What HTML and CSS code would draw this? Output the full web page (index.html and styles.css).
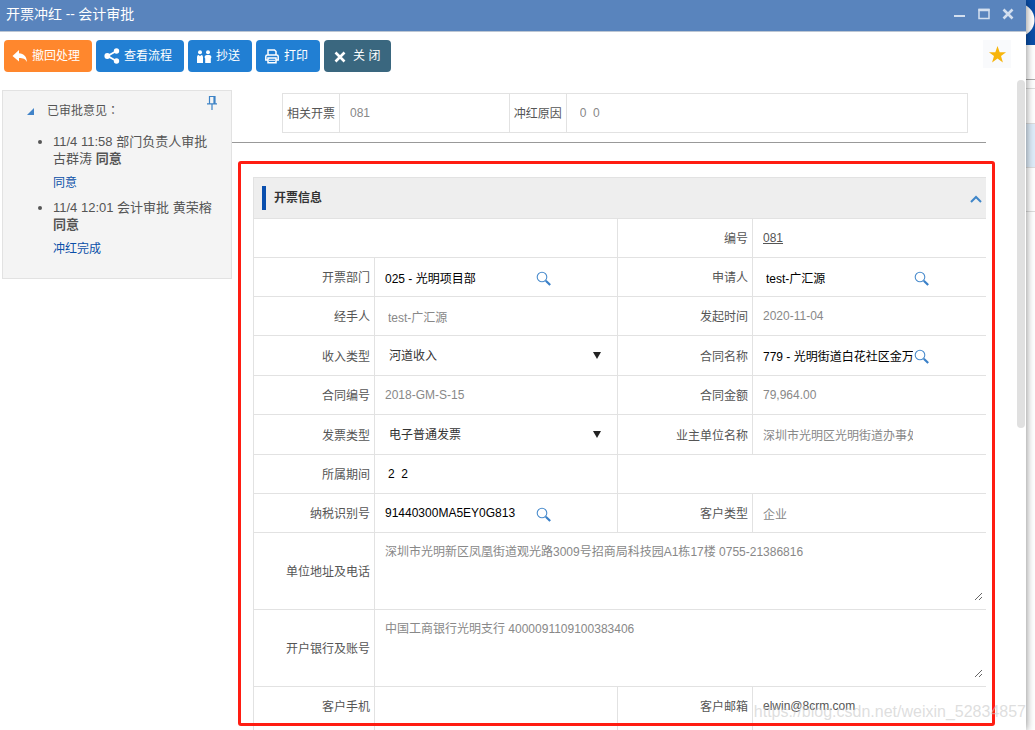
FILE: index.html
```html
<!DOCTYPE html>
<html lang="zh-CN">
<head>
<meta charset="utf-8">
<title>开票冲红 -- 会计审批</title>
<link rel="stylesheet" href="styles.css">
</head>
<body>
<svg class="defs" aria-hidden="true">
  <symbol id="search" viewBox="0 0 16 16">
    <circle cx="6" cy="6" r="4.8" fill="none" stroke="#4a8ccd" stroke-width="1.1"/>
    <path d="M9.8 9.8l4.4 4.2" stroke="#3a80c8" stroke-width="2.2"/>
  </symbol>
</svg>
<main class="window">
  <header class="titlebar">
    <h1>开票冲红 -- 会计审批</h1>
    <div class="window-controls">
      <button type="button" aria-label="最小化"><svg viewBox="0 0 12 12"><path d="M0 8h11" stroke="currentColor" stroke-width="2"/></svg></button>
      <button type="button" aria-label="最大化"><svg viewBox="0 0 12 12"><path d="M1 1.500h10v9H1z" fill="none" stroke="currentColor" stroke-width="1.500"/><path d="M.5 2h11" stroke="currentColor" stroke-width="2.500"/></svg></button>
      <button type="button" aria-label="关闭"><svg viewBox="0 0 12 12"><path d="M1.500 1.500l9 9M10.500 1.500l-9 9" stroke="currentColor" stroke-width="2.600"/></svg></button>
    </div>
  </header>

  <div class="toolbar">
    <button type="button" class="btn btn-orange"><svg viewBox="0 0 16 16"><path d="M7 2v3.300c5 .3 7.500 3.200 8 8.700-1.800-3.200-4-4-8-4V13.500L.5 8z" fill="currentColor"/></svg>撤回处理</button>
    <button type="button" class="btn"><svg viewBox="0 0 16 16"><path d="M12.500 3L3.500 8l9 5" fill="none" stroke="currentColor" stroke-width="1.800"/><g fill="currentColor"><circle cx="12.500" cy="3" r="2.700"/><circle cx="3.300" cy="8" r="2.900"/><circle cx="12.500" cy="13" r="2.700"/></g></svg>查看流程</button>
    <button type="button" class="btn"><svg viewBox="0 0 16 16"><g fill="currentColor"><circle cx="4" cy="4.200" r="2"/><circle cx="12" cy="4.200" r="2"/><path d="M1 15V9Q1 7 2.700 7L4 8.300 5.300 7Q7 7 7 9v6zM9.200 15v-4.500L8.500 9Q9 7 10.700 7h2.600q1.700 0 2.200 2l-.7 1.500V15z"/></g></svg>抄送</button>
    <button type="button" class="btn"><svg viewBox="0 0 16 16"><path d="M4 7V2h6.500L12 3.500V7M4 12H1.800V8.500Q1.800 7 3.300 7h9.400q1.500 0 1.500 1.500V12H12M4 10h8v4.700H4z" fill="none" stroke="currentColor" stroke-width="1.500"/><path d="M5 12.300h6" stroke="currentColor"/></svg>打印</button>
    <button type="button" class="btn btn-close"><svg viewBox="0 0 16 16"><path d="M3.500 4.500l9 9M12.500 4.500l-9 9" stroke="currentColor" stroke-width="2.600"/></svg>关&nbsp;闭</button>
    <button type="button" class="favorite" aria-label="收藏"><svg viewBox="0 0 20 20"><path d="M10 1l2.300 6.500H19l-5.300 4.100 2 6.900L10 14.300l-5.700 4.200 2-6.900L1 7.500h6.700z" fill="#f7b50c"/></svg></button>
  </div>

  <div class="workspace">
    <aside class="opinions">
      <div class="opinions-head">
        <svg class="caret" viewBox="0 0 8 8"><path d="M7 0v7H0z" fill="#4183c8"/></svg>
        <span>已审批意见<span class="colon" lang="zh-TW">：</span></span>
        <button type="button" class="pin" aria-label="固定"><svg viewBox="0 0 12 14"><path d="M3 .5h6M3.500 0v7.500M8 0v7.500M9 0v7.500M1 7.800h10M6 8v6" fill="none" stroke="#3d83c6" stroke-width="1.200"/></svg></button>
      </div>
      <ul>
        <li>11/4 11:58 部门负责人审批 古群涛 <b>同意</b><p>同意</p></li>
        <li>11/4 12:01 会计审批 黄荣榕 <b>同意</b><p>冲红完成</p></li>
      </ul>
    </aside>

    <div class="content">
      <div class="summary">
        <label for="related">相关开票</label>
        <div class="field"><input id="related" value="081" readonly></div>
        <label for="reason">冲红原因</label>
        <div class="field"><input id="reason" class="inset" value="0&nbsp;&nbsp;0" readonly></div>
      </div>

      <section class="panel">
        <header class="panel-head">
          <h2>开票信息</h2>
          <button type="button" aria-label="收起"><svg viewBox="0 0 12 8"><path d="M1 7l5-5 5 5" fill="none" stroke="#3f86c9" stroke-width="2"/></svg></button>
        </header>
        <div class="row">
          <div class="field blank-left"></div>
          <span class="name">编号</span>
          <div class="field"><a href="#">081</a></div>
        </div>
        <div class="row">
          <label for="dept">开票部门</label>
          <div class="field"><input id="dept" class="active" value="025 - 光明项目部"><button type="button" class="lookup" aria-label="查找部门"><svg><use href="#search"/></svg></button></div>
          <label for="applicant">申请人</label>
          <div class="field"><input id="applicant" class="active inset" value="test-广汇源"><button type="button" class="lookup" aria-label="查找申请人"><svg><use href="#search"/></svg></button></div>
        </div>
        <div class="row">
          <label for="handler">经手人</label>
          <div class="field"><input id="handler" class="inset" value="test-广汇源" readonly></div>
          <label for="date">发起时间</label>
          <div class="field"><input id="date" value="2020-11-04" readonly></div>
        </div>
        <div class="row row-select">
          <label for="income">收入类型</label>
          <div class="field"><select id="income"><option>河道收入</option></select></div>
          <label for="contract">合同名称</label>
          <div class="field"><input id="contract" class="active" value="779 - 光明街道白花社区金万"><button type="button" class="lookup" aria-label="查找合同"><svg><use href="#search"/></svg></button></div>
        </div>
        <div class="row">
          <label for="contract-no">合同编号</label>
          <div class="field"><input id="contract-no" value="2018-GM-S-15" readonly></div>
          <label for="amount">合同金额</label>
          <div class="field"><input id="amount" value="79,964.00" readonly></div>
        </div>
        <div class="row row-select">
          <label for="invoice">发票类型</label>
          <div class="field"><select id="invoice"><option>电子普通发票</option></select></div>
          <label for="owner">业主单位名称</label>
          <div class="field"><input id="owner" value="深圳市光明区光明街道办事处" readonly></div>
        </div>
        <div class="row">
          <label for="period">所属期间</label>
          <div class="field"><input id="period" class="active inset" value="2&nbsp;&nbsp;2"></div>
          <div class="field blank-right"></div>
        </div>
        <div class="row">
          <label for="tax">纳税识别号</label>
          <div class="field"><input id="tax" class="active" value="91440300MA5EY0G813"><button type="button" class="lookup" aria-label="查找识别号"><svg><use href="#search"/></svg></button></div>
          <label for="type">客户类型</label>
          <div class="field"><input id="type" value="企业" readonly></div>
        </div>
        <div class="row">
          <label for="address">单位地址及电话</label>
          <div class="field wide"><textarea id="address" readonly>深圳市光明新区凤凰街道观光路3009号招商局科技园A1栋17楼 0755-21386816</textarea></div>
        </div>
        <div class="row">
          <label for="bank">开户银行及账号</label>
          <div class="field wide"><textarea id="bank" readonly>中国工商银行光明支行 4000091109100383406</textarea></div>
        </div>
        <div class="row">
          <label for="phone">客户手机</label>
          <div class="field"><input id="phone" value=""></div>
          <label for="email">客户邮箱</label>
          <div class="field"><input id="email" class="dark" value="elwin@8crm.com" readonly></div>
        </div>
        <div class="row">
          <div class="field no-border"></div><div class="field"></div><div class="field"></div><div class="field no-border"></div>
        </div>
      </section>
      <div class="highlight"></div>
    </div>
    <div class="scrollbar"></div>
  </div>
</main>
<div class="backdrop">
  <div class="backdrop-bar"></div>
  <div class="backdrop-tools"></div>
  <div class="backdrop-gap"></div>
  <div class="backdrop-row"></div>
  <div class="backdrop-row selected"></div>
  <div class="backdrop-row"></div>
</div>
<div class="watermark">https://blog.csdn.net/weixin_52834857</div>
</body>
</html>
```
FILE: styles.css
```css
* { box-sizing: border-box; }

body {
  margin: 0;
  height: 100vh;
  display: flex;
  overflow: hidden;
  position: relative;
  background: #fff;
  color: #555;
  font: 12px/16px "Liberation Sans", "Noto Sans CJK SC", sans-serif;
}

button, input, select, textarea { font: inherit; color: inherit; }
button { border: 0; padding: 0; background: none; display: flex; align-items: center; }
h1, h2, p, ul { margin: 0; padding: 0; }
.defs { position: absolute; width: 0; height: 0; }

.window {
  flex: 1;
  min-width: 0;
  display: flex;
  flex-direction: column;
  position: relative;
  z-index: 1;
  background: #fff;
  box-shadow: 0 0 8px rgba(0, 0, 0, 0.5);
}

.titlebar {
  display: flex;
  justify-content: space-between;
  align-items: center;
  height: 32px;
  padding: 0 12px 3px 6px;
  background: #5984bd;
  border-bottom: 1px solid #bcc6d3;
  color: #fff;
}
.titlebar h1 { font-family: "Open Sans", "Noto Sans CJK SC", sans-serif; font-size: 14px; font-weight: 400; line-height: 20px; }
.window-controls { display: flex; gap: 12px; color: #d3dfef; }
.window-controls svg { width: 12px; height: 12px; }

.toolbar { display: flex; gap: 4px; padding: 8px 15px 8px 4px; }
.btn {
  gap: 4px;
  height: 32px;
  padding: 0 12px 0 8px;
  border-radius: 4px;
  background: #217fd3;
  color: #fff;
}
.btn svg { width: 16px; height: 16px; }
.btn-orange { background: #ff872d; }
.btn-close { padding-right: 11px; background: #3a677f; }
.btn-close svg { margin-right: 1px; }
.favorite { width: 28px; height: 28px; margin-left: auto; justify-content: center; background: #f9fafc; }
.favorite svg { width: 19px; height: 19px; }

.workspace { flex: 1; min-height: 0; display: flex; align-items: flex-start; }

.opinions {
  width: 230px;
  flex: none;
  margin: 10px 0 0 2px;
  padding: 4px 13px 13px 24px;
  background: #f4f4f4;
  border: 1px solid #e2e2e2;
}
.opinions-head { display: flex; align-items: center; height: 30px; gap: 12px; }
.caret { width: 8px; height: 8px; margin-top: 4px; }
.colon { font-family: "Noto Sans CJK TC", sans-serif; }
.pin { margin: -14px 0 0 auto; }
.pin svg { width: 12px; height: 14px; }
.opinions ul { padding: 8px 0 0 26px; font-size: 13px; line-height: 17px; }
.opinions p { padding: 8px 0; font-size: 12px; line-height: 16px; color: #0a4fa8; }
.opinions b { font-weight: 700; }

.content { flex: 1; min-width: 0; align-self: stretch; position: relative; padding-right: 31px; }
.summary {
  display: grid;
  grid-template-columns: 56px 170fr 57px 402fr;
  margin: 13px 18px 9px 50px;
  height: 40px;
  border: 1px solid #e2e2e2;
}
.summary label { display: flex; align-items: center; justify-content: center; padding-top: 2px; }
.summary .field, .summary .field + label { border-left: 1px solid #e2e2e2; }

.panel { margin-left: 21px; padding-top: 35px; position: relative; }
.panel::before { content: ""; position: absolute; top: 0; left: -21px; right: 0; border-top: 1px solid #999; }
.panel-head {
  display: flex;
  align-items: center;
  justify-content: space-between;
  height: 41px;
  padding: 0 4px 0 8px;
  background: #eee;
  border: 1px solid #e2e2e2;
  border-width: 1px 0 0 1px;
}
.panel-head h2 { border-left: 4px solid #0a4fae; padding-left: 8px; font-size: 12px; font-weight: 700; line-height: 24px; color: #333; }
.panel-head svg { width: 12px; height: 8px; margin-top: 2px; }

.row { display: grid; grid-template-columns: 121px 243fr 135px 234fr; min-height: 39px; }
.row-select { min-height: 40px; }
.row > * { border: 1px solid #e2e2e2; border-width: 1px 0 0 1px; }
.row > .no-border { border-top-color: transparent; }
.row > label, .row > .name { display: flex; align-items: center; justify-content: flex-end; padding: 2px 4px 0 0; }
.field { display: flex; align-items: center; min-width: 0; padding-left: 10px; color: #888; }
.blank-left, .blank-right { grid-column: span 2; }
.wide { grid-column: span 3; }
.field a { color: #555; }
.field input { width: 150px; height: 24px; padding: 0; border: 0; outline: 0; background: none; }
.field .inset { padding-left: 3px; }
.field .active { color: #000; }
.field .dark { color: #555; }
.lookup { margin-top: 3px; margin-left: 1px; }
.lookup svg { width: 16px; height: 16px; }
.field select {
  width: 100%;
  height: 24px;
  padding: 0 0 0 4px;
  border: 0;
  appearance: none;
  color: #333;
  background: none;
}
.field:has(select)::after {
  content: "";
  flex: none;
  border: 4px solid transparent;
  border-top: 7px solid #222;
  border-bottom: 0;
  margin-right: 16px;
}
.field textarea {
  width: 100%;
  height: 60px;
  margin: 8px 3px 8px 0;
  padding: 3px 0;
  border: 0;
  outline: 0;
  background: none;
  resize: both;
}

.highlight {
  position: absolute;
  top: 81px;
  bottom: 4px;
  left: 6px;
  right: 22px;
  border: 3px solid #ff1d12;
  border-radius: 3px;
  pointer-events: none;
}
.scrollbar { width: 8px; height: 348px; margin-right: 1px; border-radius: 4px; background: #e0e0e0; }

.backdrop { width: 9px; overflow: hidden; }
.backdrop-bar { height: 45px; background: radial-gradient(circle at -8px 20px, #fff 16px, #0a4ea8 17px); }
.backdrop-tools { height: 35px; border-bottom: 1px solid #aaa; }
.backdrop-gap { height: 9px; border-bottom: 1px solid #ddd; }
.backdrop-row { height: 44px; border-bottom: 1px solid #ddd; }
.backdrop-gap + .backdrop-row { height: 35px; }
.selected { background: #deecf9; }

.watermark {
  position: absolute;
  z-index: 2;
  right: 9px;
  bottom: 8px;
  font-size: 16px;
  line-height: 20px;
  color: rgba(200, 200, 200, 0.6);
  pointer-events: none;
}
```
